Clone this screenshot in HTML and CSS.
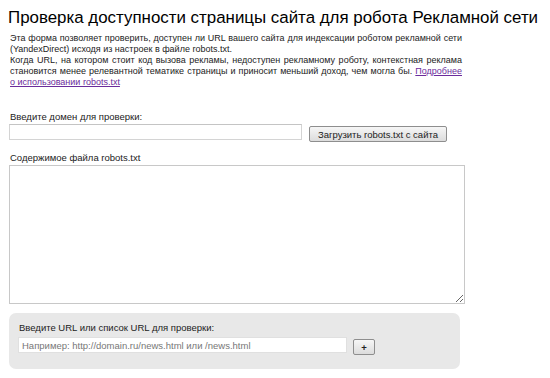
FILE: index.html
```html
<!DOCTYPE html>
<html lang="ru">
<head>
    <meta charset="UTF-8">
    <title>Проверка доступности страницы сайта для робота Рекламной сети</title>
    <link rel="stylesheet" href="styles.css">
</head>
<body>
    <div class="page">
        <h1>Проверка доступности страницы сайта для робота Рекламной сети</h1>

        <p class="intro">
            Эта форма позволяет проверить, доступен ли URL вашего сайта для индексации роботом рекламной сети (YandexDirect) исходя из настроек в файле robots.txt.<br>
            Когда URL, на котором стоит код вызова рекламы, недоступен рекламному роботу, контекстная реклама становится менее релевантной тематике страницы и приносит меньший доход, чем могла бы. <a href="#">Подробнее о использовании robots.txt</a>
        </p>

        <div class="field">
            <label class="label">Введите домен для проверки:</label>
            <div class="row">
                <input type="text" class="domain-input">
                <button class="btn">Загрузить robots.txt с сайта</button>
            </div>
        </div>

        <div class="field">
            <label class="label">Содержимое файла robots.txt</label>
            <textarea class="robots-text"></textarea>
        </div>

        <div class="url-box">
            <label class="label">Введите URL или список URL для проверки:</label>
            <div class="row">
                <input type="text" class="url-input" placeholder="Например: http://domain.ru/news.html или /news.html">
                <button class="btn plus">+</button>
            </div>
        </div>
    </div>
</body>
</html>
```

FILE: styles.css
```css
body {
    margin: 0;
    padding: 0;
    background-color: #fff;
    color: #000;
    font-family: 'Liberation Sans', Arial, sans-serif;
}
.page {
    padding: 8px 0 0 9px;
}
h1 {
    font-size: 16.9px;
    font-weight: normal;
    margin: 0 0 5px -1px;
    line-height: 20px;
    white-space: nowrap;
}
.intro {
    width: 452px;
    margin: 0 0 0 1px;
    font-size: 9px;
    line-height: 11px;
    text-align: justify;
    color: #222;
}
.intro a {
    color: #6b2c9c;
}
.field {
    margin-top: 23px;
}
.field + .field {
    margin-top: 10px;
}
.label {
    display: block;
    font-size: 9.5px;
    line-height: 12px;
    color: #222;
    margin: 0 0 1px 1px;
}
.row {
    display: flex;
    align-items: flex-start;
    gap: 7px;
}
input, textarea {
    box-sizing: border-box;
    border: 1px solid #d4d4d4;
    border-top-color: #c4c4c4;
    background: #fff;
    font-family: inherit;
    margin: 0;
}
.domain-input {
    width: 293px;
    height: 16px;
}
.btn {
    box-sizing: border-box;
    height: 16px;
    padding: 0 8px;
    font-family: inherit;
    font-size: 9.5px;
    color: #222;
    border: 1px solid #8e8e8e;
    border-radius: 2px;
    background: linear-gradient(#f6f6f6, #dcdcdc);
    margin-top: 2px;
}
.robots-text {
    display: block;
    width: 456px;
    height: 139px;
    resize: vertical;
    border-color: #c8c8c8;
}
.url-box {
    width: 442px;
    margin-top: 9px;
    padding: 9px 0 14px 9px;
    background-color: #e8e8e8;
    border-radius: 7px;
}
.url-box .label {
    margin-bottom: 3px;
}
.url-input {
    width: 329px;
    height: 16px;
    font-size: 9.5px;
    padding: 0 3px;
    border-color: #e0e0e0;
}
.url-input::placeholder {
    color: #777;
}
.plus {
    width: 22px;
    padding: 0;
    margin-left: -1px;
    font-weight: bold;
}
```
